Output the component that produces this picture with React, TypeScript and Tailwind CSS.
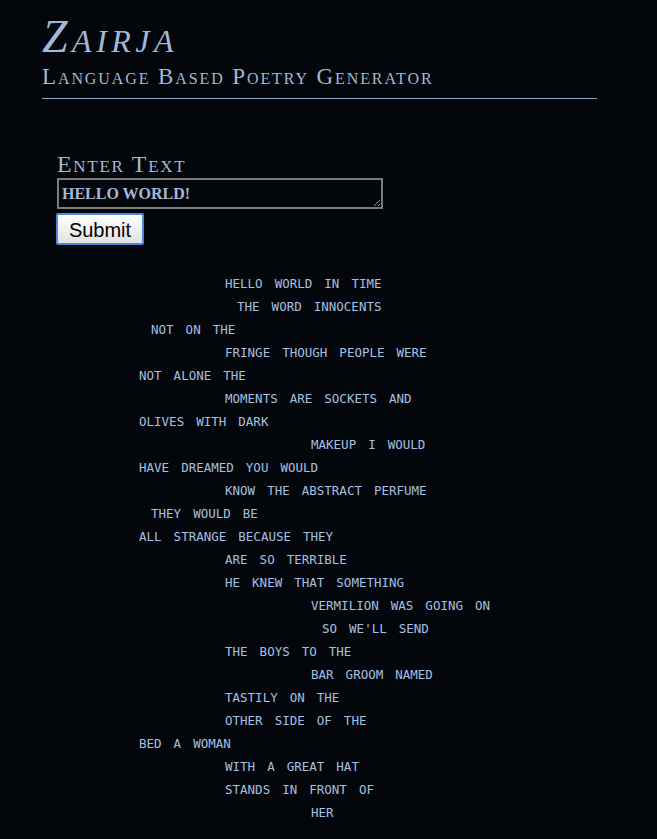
const poem: [number, string][] = [
  [86, "HELLO WORLD IN TIME"],
  [98, "THE WORD INNOCENTS"],
  [12, "NOT ON THE"],
  [86, "FRINGE THOUGH PEOPLE WERE"],
  [0, "NOT ALONE THE"],
  [86, "MOMENTS ARE SOCKETS AND"],
  [0, "OLIVES WITH DARK"],
  [172, "MAKEUP I WOULD"],
  [0, "HAVE DREAMED YOU WOULD"],
  [86, "KNOW THE ABSTRACT PERFUME"],
  [12, "THEY WOULD BE"],
  [0, "ALL STRANGE BECAUSE THEY"],
  [86, "ARE SO TERRIBLE"],
  [86, "HE KNEW THAT SOMETHING"],
  [172, "VERMILION WAS GOING ON"],
  [183, "SO WE'LL SEND"],
  [86, "THE BOYS TO THE"],
  [172, "BAR GROOM NAMED"],
  [86, "TASTILY ON THE"],
  [86, "OTHER SIDE OF THE"],
  [0, "BED A WOMAN"],
  [86, "WITH A GREAT HAT"],
  [86, "STANDS IN FRONT OF"],
  [172, "HER"],
];

export default function App() {
  return (
    <div className="min-h-screen w-[657px] bg-[#03060a] text-[#a3b8d6] font-['Liberation_Serif',serif]">
      <div className="pl-[42px] pt-[11px] w-[597px]">
        <h1 className="text-[46px] leading-[52px] italic [font-variant:small-caps] tracking-[4.5px]">Zairja</h1>
        <h2 className="text-[23px] leading-[28px] [font-variant:small-caps] border-b border-[#8ea2c2] pb-[7px] tracking-[1.9px]">
          Language Based Poetry Generator
        </h2>
      </div>

      <form className="pl-[57px] pt-[52px] flex flex-col items-start" onSubmit={(e) => e.preventDefault()}>
        <label className="text-[24px] leading-[26px] [font-variant:small-caps] tracking-[1.7px]">Enter Text</label>
        <textarea
          defaultValue="HELLO WORLD!"
          className="mt-[1px] w-[326px] h-[31px] border-2 border-[#7b7b7b] bg-[#03060a] text-[#a3b8d6] font-bold text-[16px] leading-[22px] px-[3px] pt-[3px] pb-0 font-['Liberation_Serif',serif] outline-none resize"
        />
        <button
          type="submit"
          className="mt-[4px] -ml-[1px] w-[88px] h-[32px] border-2 border-[#4f86d6] rounded-[2px] bg-gradient-to-b from-[#ffffff] to-[#e2e2e2] text-black text-[20px] font-['Liberation_Sans',sans-serif]"
        >
          Submit
        </button>
      </form>

      <div className="pl-[139px] pt-[27px] pb-[10px] font-['DejaVu_Sans_Mono',monospace] text-[12.5px] leading-[23px] [word-spacing:4.5px] text-[#a6c0e2] whitespace-pre">
        {poem.map(([indent, line], i) => (
          <div key={i} style={{ paddingLeft: indent }}>
            {line}
          </div>
        ))}
      </div>
    </div>
  );
}
